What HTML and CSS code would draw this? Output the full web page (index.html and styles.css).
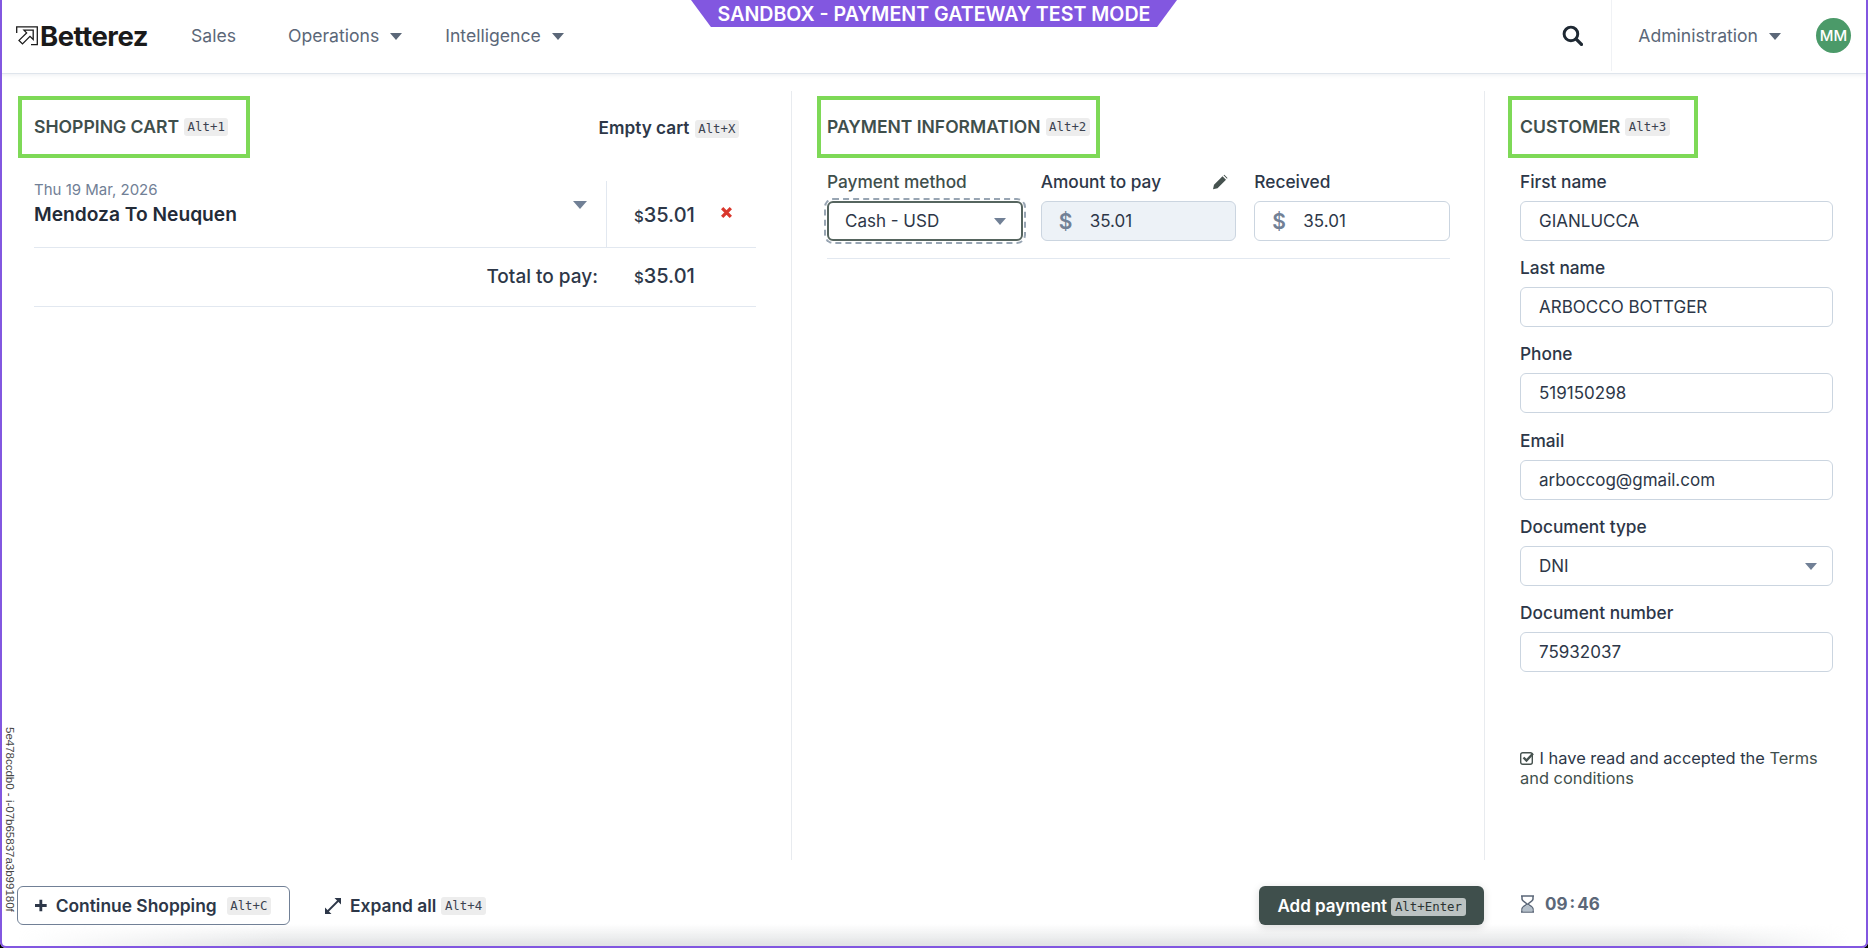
FILE: index.html
```html
<!DOCTYPE html>
<html lang="en">
<head>
<meta charset="utf-8">
<title>Betterez</title>
<link rel="stylesheet" href="styles.css">
</head>
<body>
<div class="frame">
  <div class="banner">SANDBOX - PAYMENT GATEWAY TEST MODE</div>
  <header class="topbar">
    <a class="logo">
      <svg class="logo-mark" viewBox="0 0 22 20" width="22" height="20"><path d="M.7 7V.8H21.300V18.700H15" fill="none" stroke="#1a1a1a" stroke-width="1.300"/><path d="M8 4.200H17.200V13.400L14 10.400 6.500 17.900 3 14.400 10.600 6.900Z" fill="none" stroke="#1a1a1a" stroke-width="1.300" stroke-linejoin="miter"/></svg>
      <span>Betterez</span>
    </a>
    <nav class="nav">
      <span class="nav-item sales">Sales</span>
      <span class="nav-item operations">Operations<i class="caret"></i></span>
      <span class="nav-item">Intelligence<i class="caret"></i></span>
    </nav>
    <div class="top-right">
      <svg class="search" viewBox="0 0 20 20" width="21" height="21"><circle cx="8.500" cy="8.500" r="6.500" fill="none" stroke="#1f2933" stroke-width="2.800"/><path d="M13.500 13.500 18.500 18.500" stroke="#1f2933" stroke-width="3.200" stroke-linecap="round"/></svg>
      <span class="nav-item admin">Administration<i class="caret"></i></span>
      <span class="avatar">MM</span>
    </div>
  </header>

  <main class="columns">
    <section class="col col-cart">
      <div class="col-head">
        <h2 class="hl hl-cart">SHOPPING CART <kbd>Alt+1</kbd></h2>
        <span class="empty">Empty cart <kbd>Alt+X</kbd></span>
      </div>
      <div class="cart-row">
        <div class="cart-info">
          <div class="cart-date">Thu 19 Mar, 2026</div>
          <div class="cart-title">Mendoza To Neuquen</div>
          <i class="caret caret-cart"></i>
        </div>
        <div class="cart-price">
          <span class="price"><small>$</small>35.01</span>
          <svg class="remove" viewBox="0 0 12 12" width="13" height="13"><path d="M2 2 10 10M10 2 2 10" stroke="#d9372c" stroke-width="3"/></svg>
        </div>
      </div>
      <div class="total-row">
        <span class="total-label">Total to pay:</span>
        <span class="price total-price"><small>$</small>35.01</span>
      </div>
    </section>

    <section class="col col-pay">
      <div class="col-head">
        <h2 class="hl hl-pay">PAYMENT INFORMATION <kbd>Alt+2</kbd></h2>
      </div>
      <div class="pay-grid">
        <div class="field">
          <label class="label label-green">Payment method</label>
          <div class="input select focused">Cash - USD<i class="caret caret-select"></i></div>
        </div>
        <div class="field">
          <label class="label label-edit">Amount to pay
            <svg viewBox="0 0 16 16" width="16" height="16"><path d="M1 15l1-4.500L10.500 2l3.500 3.500L5.500 14zM11.500 1l.8-.5 3.200 3.200-.5.800z" fill="#46524f" transform="translate(0 .3)"/></svg>
          </label>
          <div class="input money disabled"><b class="dollar">$</b>35.01</div>
        </div>
        <div class="field">
          <label class="label">Received</label>
          <div class="input money"><b class="dollar">$</b>35.01</div>
        </div>
      </div>
    </section>

    <section class="col col-customer">
      <div class="col-head">
        <h2 class="hl hl-customer">CUSTOMER <kbd>Alt+3</kbd></h2>
      </div>
      <div class="customer-form">
        <div class="field"><label class="label">First name</label><div class="input">GIANLUCCA</div></div>
        <div class="field"><label class="label">Last name</label><div class="input">ARBOCCO BOTTGER</div></div>
        <div class="field"><label class="label">Phone</label><div class="input">519150298</div></div>
        <div class="field"><label class="label">Email</label><div class="input">arboccog@gmail.com</div></div>
        <div class="field"><label class="label">Document type</label><div class="input select">DNI<i class="caret caret-select"></i></div></div>
        <div class="field"><label class="label">Document number</label><div class="input">75932037</div></div>
      </div>
      <p class="terms">
        <svg viewBox="0 0 15 14" width="15" height="14"><rect x=".7" y="1.700" width="11.600" height="11.600" rx="2" fill="none" stroke="#46524f" stroke-width="1.400"/><path d="M3.500 6.500 6.500 9.500 13 2.500" fill="none" stroke="#46524f" stroke-width="2.400"/></svg>
        I have read and accepted the <a>Terms</a> <a>and conditions</a>
      </p>
    </section>
  </main>

  <footer class="footer">
    <button class="btn-outline">
      <svg viewBox="0 0 14 14" width="15" height="15"><path d="M7 0v14M0 7h14" stroke="#2d3748" stroke-width="3.400"/></svg>
      <span>Continue Shopping</span><kbd>Alt+C</kbd>
    </button>
    <button class="btn-link">
      <svg viewBox="0 0 16 16" width="16" height="16"><path d="M2 14 14 2" stroke="#2d3748" stroke-width="1.800"/><path d="M9.500 0H16V6.500ZM6.500 16H0V9.500Z" fill="#2d3748"/></svg>
      <span>Expand all</span><kbd>Alt+4</kbd>
    </button>
    <button class="btn-primary">Add payment <kbd>Alt+Enter</kbd></button>
    <div class="timer">
      <svg viewBox="0 0 15 18" width="15" height="18"><path d="M1 1h13M1 17h13M2 1v3C2 6.500 7 8 7 9S2 11.500 2 14v3M13 1v3C13 6.500 8 8 8 9s5 2.500 5 5v3" fill="none" stroke="#5b6778" stroke-width="1.500"/><path d="M2.500 16.500V14C2.500 12.500 6 10.500 7.500 10 9 10.500 12.500 12.500 12.500 14v2.500z" fill="#b4bfca"/></svg>
      <span>09 : 46</span>
    </div>
  </footer>

  <div class="build-id">5e478ccdb0 - i-07b65837a3b99180f</div>
</div>
</body>
</html>
```

FILE: styles.css
```css
* { box-sizing: border-box; }
html, body { margin: 0; height: 100%; background: #000; }
body { font-family: Inter, "Noto Sans", sans-serif; color: #2d3748; overflow: hidden; }

.frame {
  position: relative;
  width: 1868px;
  height: 948px;
  display: flex;
  flex-direction: column;
  background: #fff;
  border-radius: 0 0 6px 6px;
  overflow: hidden;
}
.frame::after {
  content: "";
  position: absolute;
  inset: 0;
  border-radius: 0 0 6px 6px;
  box-shadow: inset 2px 0 #8257e0, inset -2px 0 #8257e0, inset 0 -2px #8257e0;
  pointer-events: none;
}

.banner {
  position: absolute;
  top: 0;
  left: 691px;
  width: 486px;
  height: 27px;
  background: #8257e0;
  clip-path: polygon(0 0, 100% 0, 95.900% 100%, 4.100% 100%);
  color: #fff;
  font-size: 19.600px;
  font-weight: 600;
  line-height: 29px;
  text-align: center;
  white-space: nowrap;
  z-index: 2;
}

kbd {
  font-family: "DejaVu Sans Mono", monospace;
  font-size: 12.400px;
  font-weight: 400;
  line-height: 18px;
  display: inline-block;
  padding: 0 3.500px;
  margin-left: 1px;
  border-radius: 3px;
  background: #ededed;
  color: #3b4250;
  vertical-align: 1px;
}

.caret {
  display: inline-block;
  width: 0;
  height: 0;
  border-left: 6px solid transparent;
  border-right: 6px solid transparent;
  border-top: 7px solid #5b6778;
}

.topbar {
  flex: 0 0 74px;
  display: flex;
  align-items: center;
  padding: 0 17px 2px 16px;
  border-bottom: 1px solid #dfe5ec;
  box-shadow: 0 1px 4px rgba(100, 116, 139, .12);
}
.logo { display: flex; align-items: center; gap: 2px; color: #1a1a1a; }
.logo-mark { flex: none; }
.logo span { font-size: 27.500px; font-weight: 700; letter-spacing: -.5px; line-height: 30px; }
.nav { display: flex; align-items: center; margin-left: 43px; }
.nav-item { font-size: 17.600px; color: #5b6778; white-space: nowrap; display: inline-flex; align-items: center; }
.nav-item .caret { margin-left: 11px; margin-top: 1px; }
.sales { margin-right: 52px; }
.operations { margin-right: 43px; }
.top-right { margin-left: auto; display: flex; align-items: center; height: 100%; margin-top: 3px; }
.search { margin-right: 28px; margin-top: -3px; }
.admin {
  height: 100%;
  padding-left: 26px;
  border-left: 1px solid #f0f2f5;
  margin-right: 35px;
  margin-top: -3px;
}
.avatar {
  width: 35px;
  height: 35px;
  border-radius: 50%;
  background: #4b9a69;
  color: #fff;
  font-size: 15px;
  font-weight: 500;
  text-align: center;
  line-height: 35px;
  margin-top: -4px;
}

.columns { flex: 1; display: grid; grid-template-columns: 792px 693px 1fr; padding-top: 17px; min-height: 0; }
.col { min-width: 0; }
.col-cart { padding: 0 35px 0 34px; border-right: 1px solid #e8ebef; }
.col-pay { padding: 0 34px 0 35px; border-right: 1px solid #e8ebef; }
.col-customer { padding: 0 35px 0 35px; }

.col-head { display: flex; align-items: center; justify-content: space-between; margin-top: 5px; }
.hl {
  margin: 0;
  height: 62px;
  display: flex;
  align-items: center;
  gap: 4px;
  padding-bottom: 1px;
  border: 4px solid #7ed957;
  font-size: 17.600px;
  font-weight: 600;
  color: #3f4f4c;
  white-space: nowrap;
}
.hl-cart { margin-left: -16px; padding-left: 12px; padding-right: 18px; }
.hl-pay { margin-left: -10px; padding-left: 6px; padding-right: 6px; font-size: 17.500px; }
.hl-customer { margin-left: -12px; padding-left: 8px; padding-right: 24px; }
.empty { font-size: 17.200px; font-weight: 600; color: #2d3748; margin-right: 17px; white-space: nowrap; }

.cart-row { display: flex; height: 67px; margin-top: 23px; border-bottom: 1px solid #e2e8f0; }
.cart-info { position: relative; width: 573px; border-right: 1px solid #e2e8f0; }
.cart-date { font-size: 15px; line-height: 18px; color: #718096; }
.cart-title { font-size: 19.200px; font-weight: 600; line-height: 24px; margin-top: 3px; color: #232b38; }
.caret-cart { position: absolute; top: 20px; right: 19px; border-top-color: #718096; border-top-width: 8px; border-left-width: 7px; border-right-width: 7px; }
.cart-price { flex: 1; display: flex; align-items: center; padding: 1px 0 0 27px; gap: 25px; }
.price { font-size: 20px; font-weight: 500; color: #2d3748; }
.price small { font-size: 15px; }
.remove { margin-top: -5px; }
.total-row { display: flex; justify-content: flex-end; align-items: center; height: 59px; border-bottom: 1px solid #e2e8f0; padding-bottom: 2px; }
.total-label { font-size: 19px; font-weight: 500; color: #2d3748; margin-right: 36px; }
.total-price { width: 122px; }

.pay-grid { display: grid; grid-template-columns: repeat(3, 1fr); gap: 18px; margin-top: 14px; padding-bottom: 17px; border-bottom: 1px solid #e2e8f0; }
.customer-form { display: flex; flex-direction: column; gap: 17.200px; margin-top: 14px; }
.label { display: flex; align-items: center; font-size: 17.300px; font-weight: 500; line-height: 20px; color: #2d3748; margin-bottom: 9px; white-space: nowrap; }
.label-green { color: #3f4f4c; }
.label-edit { justify-content: space-between; padding-right: 8px; }
.input {
  position: relative;
  display: flex;
  align-items: center;
  height: 40px;
  padding: 0 18px;
  border: 1px solid #cbd5e0;
  border-radius: 6px;
  background: #fff;
  font-size: 17px;
  color: #2d3748;
  white-space: nowrap;
}
.money { padding-left: 17px; }
.disabled { background: #edf2f7; }
.dollar { font-size: 21px; font-weight: 600; color: #718096; width: 31px; flex: none; }
.focused { border: 2px solid #56655f; outline: 2px dashed #98a5b3; outline-offset: 1px; padding-left: 16px; }
.caret-select { position: absolute; right: 15px; top: 50%; margin-top: -3px; border-top-color: #718096; }

.terms { margin: 76px 0 0; font-size: 16.400px; line-height: 20px; color: #2d3748; }
.terms svg { vertical-align: -1px; }
.terms a { color: #3f4f4c; }

.footer { flex: 0 0 88px; display: flex; align-items: flex-start; padding: 26px 0 0 17px; position: relative; }
.footer::before {
  content: "";
  position: absolute;
  left: 0;
  right: 0;
  bottom: 0;
  height: 24px;
  background: linear-gradient(rgba(225, 226, 228, 0), rgba(218, 220, 222, .9));
  -webkit-mask-image: linear-gradient(90deg, transparent 1%, #000 15%, #000 90%, transparent 99%);
  mask-image: linear-gradient(90deg, transparent 1%, #000 15%, #000 90%, transparent 99%);
}
button { font-family: inherit; cursor: pointer; position: relative; z-index: 1; }
.btn-outline {
  width: 273px;
  height: 39px;
  display: flex;
  align-items: center;
  padding: 0 18px 0 17px;
  gap: 9px;
  border: 1px solid #718096;
  border-radius: 6px;
  background: #fff;
  font-size: 17.400px;
  font-weight: 600;
  color: #2d3748;
  white-space: nowrap;
}
.btn-outline kbd { margin-left: 1px; }
.btn-link {
  height: 39px;
  display: flex;
  align-items: center;
  gap: 9px;
  margin-left: 35px;
  padding: 0;
  border: 0;
  background: none;
  font-size: 17.400px;
  font-weight: 600;
  color: #2d3748;
  white-space: nowrap;
}
.btn-link kbd { margin-left: -4px; }
.btn-primary {
  margin-left: auto;
  width: 225px;
  height: 39px;
  padding: 0;
  border: 0;
  border-radius: 6px;
  background: #3f4f4c;
  color: #fff;
  font-size: 17px;
  font-weight: 600;
  white-space: nowrap;
  box-shadow: 0 2px 8px rgba(0, 0, 0, .15);
}
.btn-primary kbd { background: #bcc3c2; color: #2b3433; margin-left: 0; }
.timer { flex: 0 0 384px; display: flex; align-items: center; gap: 10px; height: 36px; padding-left: 36px; font-size: 17px; font-weight: 700; color: #5b6778; word-spacing: -2px; position: relative; z-index: 1; }

.build-id {
  position: absolute;
  left: 3px;
  top: 727px;
  writing-mode: vertical-rl;
  font-family: "Liberation Sans", sans-serif;
  font-size: 11.500px;
  line-height: 13px;
  color: #444;
  white-space: nowrap;
}
```
